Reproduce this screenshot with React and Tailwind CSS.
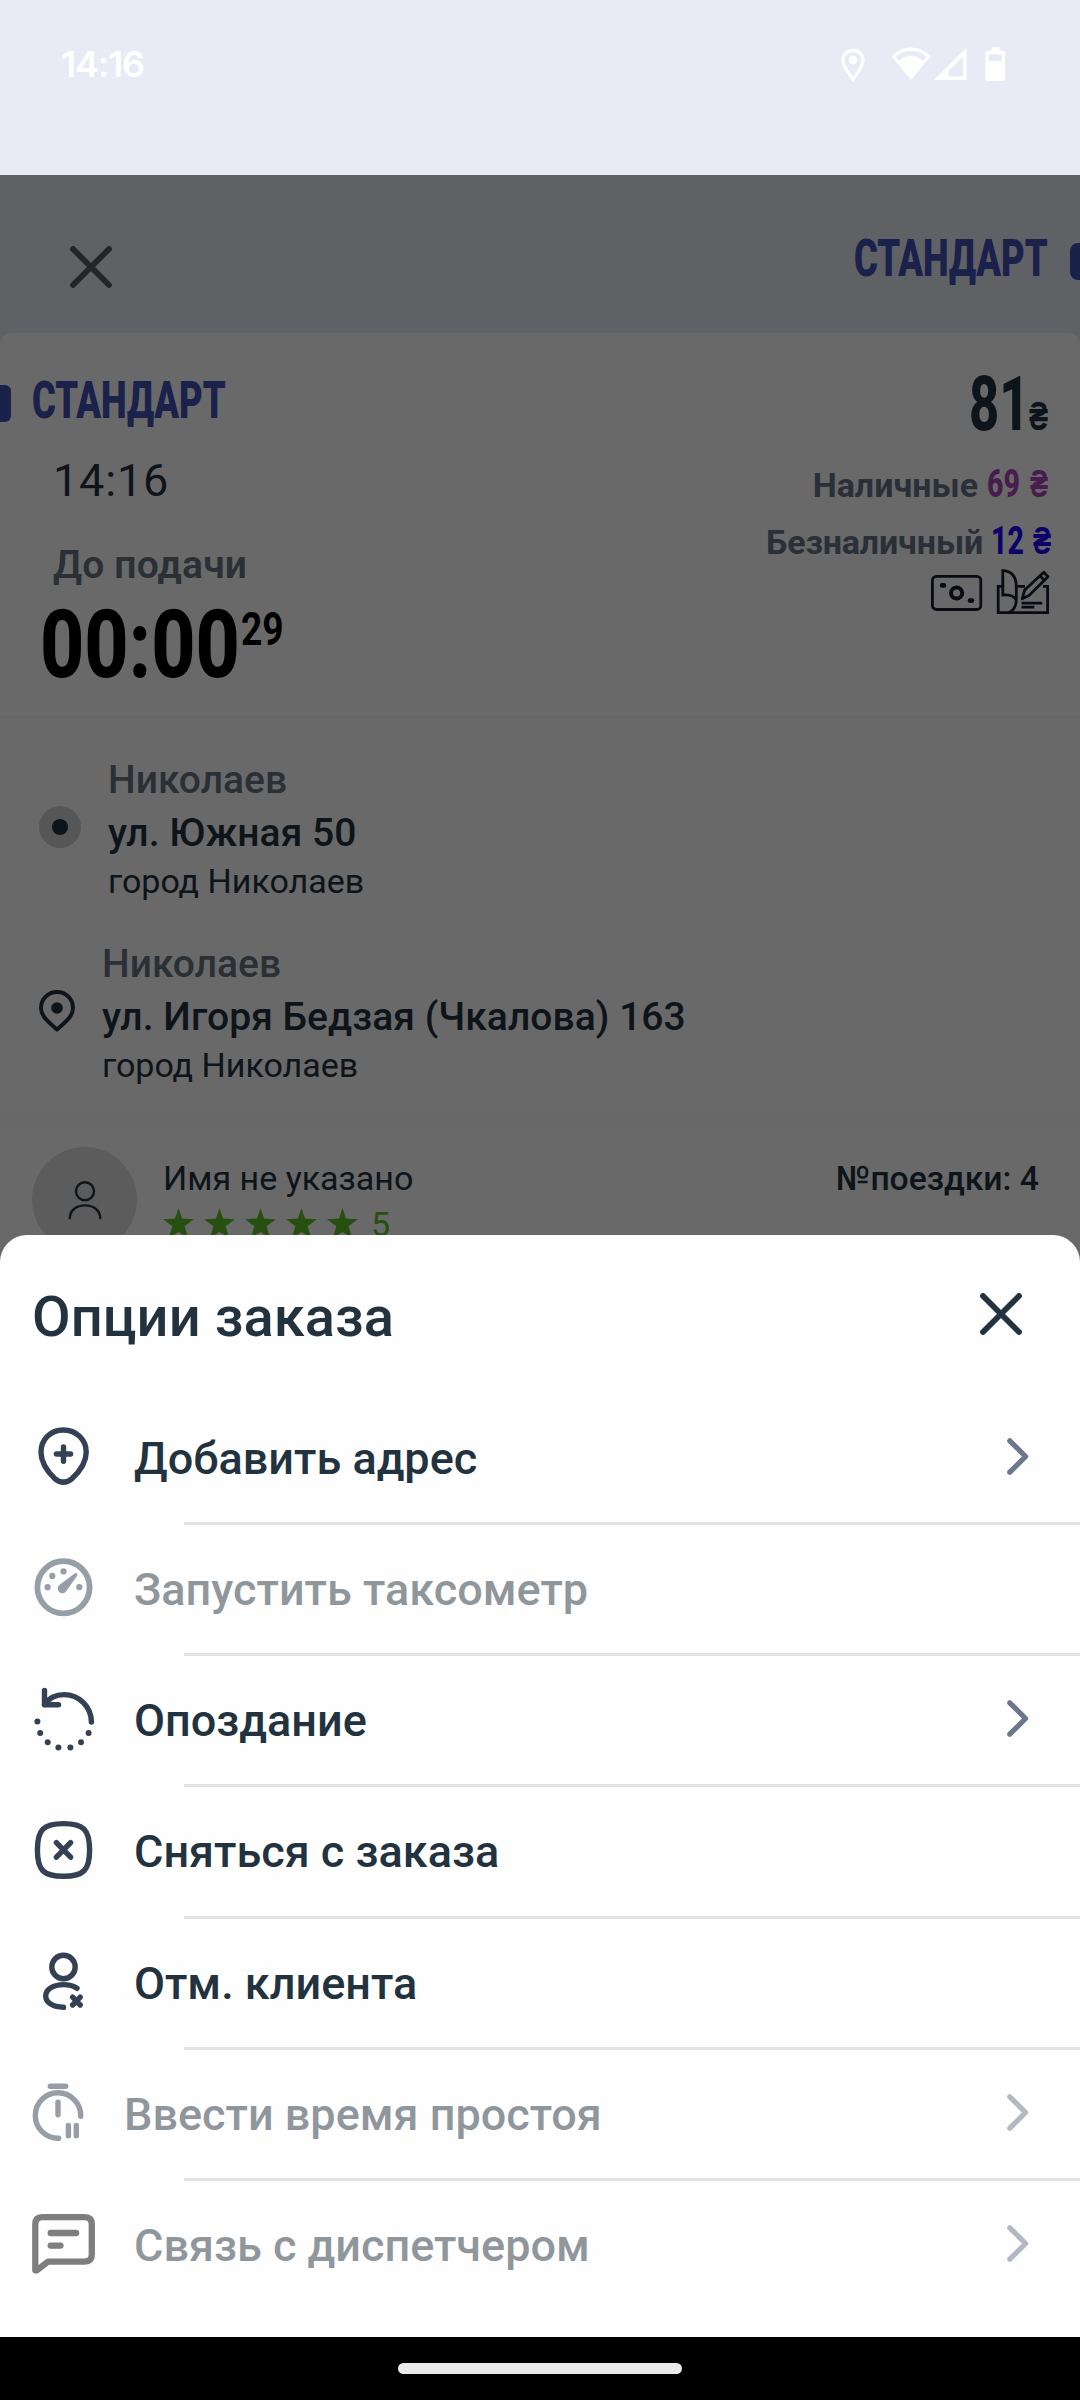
import clsx from 'clsx';

const OPTIONS = [
    { id: 'address', label: 'Добавить адрес', icon: AddAddressIcon, arrow: true },
    { id: 'meter', label: 'Запустить таксометр', icon: MeterIcon, disabled: true },
    { id: 'late', label: 'Опоздание', icon: LateIcon, arrow: true },
    { id: 'drop', label: 'Сняться с заказа', icon: DropIcon },
    { id: 'client', label: 'Отм. клиента', icon: ClientIcon },
    { id: 'idle', label: 'Ввести время простоя', icon: IdleIcon, arrow: true, disabled: true, tight: true },
    { id: 'dispatcher', label: 'Связь с диспетчером', icon: MessageIcon, arrow: true, disabled: true }
];

function OptionIcon({ className = 'text-[#344054]', width = 5.4, children }) {
    return (
        <svg
            viewBox="0 0 68 68"
            className={clsx('w-[68px] h-[68px] shrink-0', className)}
            fill="none"
            stroke="currentColor"
            strokeWidth={width}
            strokeLinecap="round"
            strokeLinejoin="round"
        >
            {children}
        </svg>
    );
}

function AddAddressIcon() {
    return (
        <OptionIcon>
            <path d="M33.3 6C20.3 6 11 15.7 11 28.3C11 39 18 48.200 25 54.800Q33.300 61.500 41.800 54.800C49 48.200 56.200 39 56.200 28.300C56.200 15.700 46.500 6 33.300 6Z" />
            <path d="M33.500 23v14.200M26.400 30h14.200" />
        </OptionIcon>
    );
}

function MeterIcon() {
    return (
        <OptionIcon width={5.8}>
            <circle cx="33.500" cy="32.300" r="26.100" />
            <g fill="currentColor" stroke="none">
                <circle cx="17.600" cy="32.200" r="3.100" />
                <circle cx="22.300" cy="20.900" r="3.100" />
                <circle cx="33.500" cy="16.400" r="3.100" />
                <circle cx="49.300" cy="32.200" r="3.100" />
                <path d="M30 29.600L44.600 18.400Q46 17.600 47 18.600Q47.900 19.700 47 21L36.800 35.300A4.700 4.700 0 1 1 30 29.600Z" />
            </g>
        </OptionIcon>
    );
}

const LATE_DOTS = [
    [7.4, 35.500],
    [10.200, 47.100],
    [17.700, 56.300],
    [28.400, 61.500],
    [40.400, 61.500],
    [51, 56.300],
    [58.600, 47.100]
];

function LateIcon() {
    return (
        <OptionIcon>
            <path d="M14.500 18.500C19 12 26 8.600 34 8.600A27.300 27.300 0 0 1 61.400 36" />
            <path d="M14.500 4.500v14.200h14" />
            {LATE_DOTS.map(([x, y]) => (
                <circle key={x} cx={x} cy={y} r="3" fill="currentColor" stroke="none" />
            ))}
        </OptionIcon>
    );
}

function DropIcon() {
    return (
        <OptionIcon>
            <path d="M33.500 6.600C53.500 6.600 59.600 12.700 59.600 33C59.600 53.200 53.500 59.300 33.500 59.300C13.500 59.300 7.400 53.200 7.400 33C7.400 12.700 13.500 6.600 33.500 6.600Z" />
            <path d="M26.400 25.600l14.200 14.600M40.600 25.600L26.400 40.200" />
        </OptionIcon>
    );
}

function ClientIcon() {
    return (
        <OptionIcon>
            <circle cx="33.500" cy="18" r="11.700" />
            <path d="M47 39.300C43.500 36.900 39 35.600 33.500 35.600C23.500 35.600 15.700 40.400 15.700 47C15.700 53.600 23 58 33.500 58.300" />
            <path d="M42.600 48.200l7.600 7.800M50.200 48.200l-7.600 7.800" />
        </OptionIcon>
    );
}

function IdleIcon() {
    return (
        <OptionIcon>
            <path d="M20.300 6.200h15.400" />
            <path d="M50.700 36.200A22.700 22.700 0 1 0 28.700 58.200" />
            <path d="M28 22.300v12.400M38.400 45.400v10.400M46.300 45.400v10.400" />
        </OptionIcon>
    );
}

function MessageIcon() {
    return (
        <OptionIcon className="text-black" width={6.3}>
            <path d="M5.300 59.300V13.200Q5.300 6.200 12.300 6.200H54.800Q61.800 6.200 61.800 13.200V43.600Q61.800 50.600 54.800 50.600H18.200L6.600 59.400Z" />
            <path d="M20.700 22h25.400M20.700 34.600h9.800" />
        </OptionIcon>
    );
}

function CloseIcon({ className }) {
    return (
        <svg viewBox="0 0 42 42" className={clsx('w-[42px] h-[42px]', className)} fill="none" stroke="currentColor" strokeWidth="5.800" strokeLinecap="round">
            <path d="M3 3l36 36M39 3L3 39" />
        </svg>
    );
}

function Chevron() {
    return (
        <svg viewBox="0 0 22 40" className="w-[22px] h-10 mr-[51px] text-[#6b778a]" fill="none" stroke="currentColor" strokeWidth="5.200" strokeLinecap="round" strokeLinejoin="round">
            <path d="M2.800 2.800L18.600 18.500L2.800 34.200" />
        </svg>
    );
}

function StatusBar() {
    return (
        <div className="h-[175px] bg-[#e8eaf6] text-white flex items-start justify-between pl-[61px] pr-[75px] pt-[42px]">
            <span className="font-['Inter'] font-semibold text-[36px] leading-[44px] -tracking-[1.200px]">14:16</span>
            <svg viewBox="0 0 166 36" className="w-[166px] h-9 mt-[5px]" fill="currentColor">
                <path d="M14 3.500C8 3.500 4 7.800 4 13.400C4 20 10 26 14 32C18 26 24 20 24 13.400C24 7.800 20 3.500 14 3.500Z" fill="none" stroke="currentColor" strokeWidth="3.300" />
                <circle cx="14" cy="13" r="4.400" />
                <path fillRule="evenodd" d="M52.800 9.600C58 3.600 64.600 .4 72 .4S86 3.600 91.400 9.600L72 33ZM56.600 9.700L60.200 14C63.400 10.600 67.400 8.700 72 8.700S80.800 10.600 84 14L87.600 9.700C83.400 6 78 4 72 4S60.800 6 56.600 9.700Z" />
                <path fillRule="evenodd" d="M127.500 .8V33H94.800ZM124.200 9.400L109.600 23.800V29.600H124.200Z" />
                <path fillRule="evenodd" d="M152.500 0h8v3.700h4Q166 3.700 166 5.700V32Q166 34 164 34H148.500Q146.500 34 146.500 32V5.700Q146.500 3.700 148.500 3.700h4ZM149.600 7.200V14H163.200V7.200Z" />
            </svg>
        </div>
    );
}

function OrderHeader() {
    return (
        <div className="h-[158px] bg-[#eaecf6] flex items-start justify-between pl-[70px]">
            <CloseIcon className="mt-[71px] text-[#585b64]" />
            <div className="flex items-start mt-[49px] text-[#3f51b5]">
                <div className="w-[194px] mr-[22px] text-[52px] leading-[70px] font-black whitespace-nowrap">
                    <span className="inline-block origin-left scale-x-[0.7]">СТАНДАРТ</span>
                </div>
                <div className="w-[10px] h-[37px] mt-[19px] rounded-l-lg bg-[#3f51b5]" />
            </div>
        </div>
    );
}

function PaymentLine({ label, amount, className, gap }) {
    return (
        <div className="flex justify-end items-baseline h-[57px] leading-[57px]">
            <span className={clsx('text-[34px] font-bold text-[#667488]', gap)}>{label}</span>
            <span className={clsx('w-[43px] text-[38px] font-extrabold whitespace-nowrap', className)}>
                <span className="inline-block origin-left scale-x-[0.75]">{amount}</span>
            </span>
            <span className="w-[18px] text-[38px] font-black">
                <span className={clsx('inline-block origin-left scale-x-[0.72]', className, 'pl-0')}>₴</span>
            </span>
        </div>
    );
}

function PaymentIcons() {
    return (
        <svg viewBox="0 0 120 48" className="w-[120px] h-12 -mr-[2px] -mt-[2px] self-end text-[#181d2c]" fill="none" stroke="currentColor" strokeWidth="2.800">
            <rect x="2.400" y="8.300" width="48.400" height="33.200" rx="4" />
            <circle cx="26.600" cy="25" r="5.600" strokeWidth="4" />
            <path d="M12 17.400h2M40 32.600h2" strokeWidth="4.600" strokeLinecap="round" />
            <path d="M72.500 18.300H68.200V44.600H117.600V18.300H113M87.500 18.300H95" />
            <path d="M72.800 27V2.600C81 2.600 86.300 8.600 86.300 18V32C84.500 28.600 79.500 26.600 72.800 27ZM86.300 32Q86 42 78.500 44.600" />
            <path d="M92.200 30.800L94.700 22L113.800 4.200L118 8.800L99 27.600Z" strokeLinejoin="round" />
            <path d="M110 7.800l4.200 4.600M91.500 35.200h20.800M91.500 39.200h12.800" />
        </svg>
    );
}

function Address({ city, street, note, children }) {
    return (
        <div className="h-[184px] flex pl-[39px]">
            {children}
            <div className="whitespace-nowrap">
                <div className="text-[39px] leading-[52px] font-medium text-[#667580]">{city}</div>
                <div className="text-[39px] leading-[54px] font-medium tracking-[0.050px]">{street}</div>
                <div className="text-[34px] leading-[43px]">{note}</div>
            </div>
        </div>
    );
}

function Client() {
    return (
        <div className="flex h-[122px] pt-[26px] pl-8 pr-[41px]">
            <div className="w-[105px] h-[105px] shrink-0 rounded-full bg-[#e0e0e0] flex items-center justify-center">
                <svg viewBox="0 0 36 40" className="w-9 h-10" fill="none" stroke="currentColor" strokeWidth="2.400" strokeLinecap="round">
                    <circle cx="18" cy="11.300" r="9" />
                    <path d="M2.800 38C3 30 9.500 25.400 18 25.400S33 30 33.200 38" />
                </svg>
            </div>
            <div className="ml-[26px]">
                <div className="text-[34px] leading-[44px] mt-[9px]">Имя не указано</div>
                <div className="flex items-start gap-[10px] mt-[8px] text-[#5fc12c]">
                    {[1, 2, 3, 4, 5].map((n) => (
                        <svg key={n} viewBox="0 0 31 31" className="w-[31px] h-[31px]" fill="currentColor">
                            <path d="M15.500 0L19 10.400L31 11.200L21.600 18.300L25.400 30.500L15.500 24L5.600 30.500L9.400 18.300L0 11.200L12 10.400Z" />
                        </svg>
                    ))}
                    <span className="ml-[3px] text-[34px] leading-[40px] -mt-[4px]">5</span>
                </div>
            </div>
            <div className="ml-auto mt-[10px] text-[33.700px] leading-[44px] font-medium">№поездки: 4</div>
        </div>
    );
}

function OrderCard() {
    return (
        <div className="bg-[#eaecf6]">
            <div className="h-[930px] rounded-t-xl bg-white text-[#22333f]">
                <div className="flex justify-between h-[385px] pr-8 border-b-2 border-[#f8f8f8]">
                    <div className="pt-[33px]">
                        <div className="flex items-start">
                            <div className="w-[11px] h-[37px] mt-[19px] mr-[21px] rounded-r-md bg-[#3f51b5]" />
                            <div className="w-[194px] text-[52px] leading-[70px] font-black text-[#3f51b5] whitespace-nowrap">
                                <span className="inline-block origin-left scale-x-[0.7]">СТАНДАРТ</span>
                            </div>
                        </div>
                        <div className="mt-[15px] ml-[53px] text-[45px] leading-[60px] tracking-[0.800px]">14:16</div>
                        <div className="mt-[29px] ml-[53px] text-[39px] leading-[50px] font-semibold tracking-[0.150px] text-[#667580]">До подачи</div>
                        <div className="mt-[10px] ml-[40px] flex items-start font-extrabold text-black">
                            <div className="w-[201px] text-[95px] leading-[90px] whitespace-nowrap">
                                <span className="inline-block origin-left scale-x-[0.81]">00:00</span>
                            </div>
                            <div className="text-[47px] leading-[57px] font-bold">
                                <span className="inline-block origin-left scale-x-[0.79]">29</span>
                            </div>
                        </div>
                    </div>
                    <div className="pt-[31px] flex flex-col">
                        <div className="flex justify-end items-baseline h-20 leading-[80px] font-extrabold">
                            <span className="w-[60px] text-[76px] whitespace-nowrap">
                                <span className="inline-block origin-left scale-x-[0.69]">81</span>
                            </span>
                            <span className="w-[19px] text-[41px] font-black">
                                <span className="inline-block origin-left scale-x-[0.7]">₴</span>
                            </span>
                        </div>
                        <div className="h-3" />
                        <PaymentLine label="Наличные" amount="69" className="text-[#ab47bc]" gap="mr-[9px]" />
                        <PaymentLine label="Безналичный" amount="12" className="pl-[4px] text-[#2400ff]" gap="-mr-px pr-[5px] -tracking-[0.150px]" />
                        <PaymentIcons />
                    </div>
                </div>

                <div className="h-[403px] pt-[36px] border-b-2 border-[#fafafa]">
                    <Address city="Николаев" street="ул. Южная 50" note="город Николаев">
                        <div className="w-[42px] h-[42px] mt-[52px] mr-[27px] rounded-full bg-[#d0d0d0] flex items-center justify-center">
                            <div className="w-4 h-4 rounded-full bg-[#22333f]" />
                        </div>
                    </Address>
                    <Address city="Николаев" street="ул. Игоря Бедзая (Чкалова) 163" note="город Николаев">
                        <svg viewBox="0 0 36 42" className="w-9 h-[42px] mt-[52px] mr-[27px]" fill="none" stroke="currentColor" strokeWidth="4">
                            <path d="M18 2C9 2 2 9 2 18C2 26.500 10 32.500 18 39.500C26 32.500 34 26.500 34 18C34 9 27 2 18 2Z" strokeLinejoin="round" />
                            <circle cx="18" cy="18" r="5.800" fill="currentColor" stroke="none" />
                        </svg>
                    </Address>
                </div>

                <Client />
            </div>
        </div>
    );
}

function OptionsSheet() {
    return (
        <section className="absolute left-0 top-[1235px] w-full h-[1102px] rounded-t-[27px] bg-[#fefefe] text-[#22333f]">
            <div className="flex items-start justify-between h-[158.800px] pl-8 pr-[58px]">
                <h1 className="mt-[50px] text-[56px] leading-[64px] font-medium tracking-[0.100px]">Опции заказа</h1>
                <button className="mt-[58px]">
                    <CloseIcon />
                </button>
            </div>
            <ul>
                {OPTIONS.map(({ id, label, icon: Icon, arrow, disabled, tight }) => (
                    <li key={id} className="h-[131.200px] flex flex-col">
                        <div className={clsx('flex-1 flex items-center pl-[30px]', disabled && 'opacity-50')}>
                            <Icon />
                            <span className={clsx('flex-1 pt-[2px] text-[45px] leading-[60px] font-medium', tight ? 'ml-[26px]' : 'ml-[36px]')}>{label}</span>
                            {arrow && <Chevron />}
                        </div>
                        <div className={clsx('h-[3px] ml-[184px]', id !== 'dispatcher' && 'bg-[#e3e3e3]')} />
                    </li>
                ))}
            </ul>
        </section>
    );
}

export default function App() {
    return (
        <div className="relative w-[1080px] h-[2400px] overflow-hidden bg-black font-['Roboto',sans-serif]">
            <StatusBar />
            <div className="relative">
                <OrderHeader />
                <OrderCard />
                {/* Scrim under the sheet */}
                <div className="absolute inset-0 bg-black/59" />
            </div>
            <OptionsSheet />
            {/* Gesture bar */}
            <div className="absolute left-[398px] top-[2363px] w-[284px] h-[11px] rounded-full bg-[#eaeaea]" />
        </div>
    );
}
